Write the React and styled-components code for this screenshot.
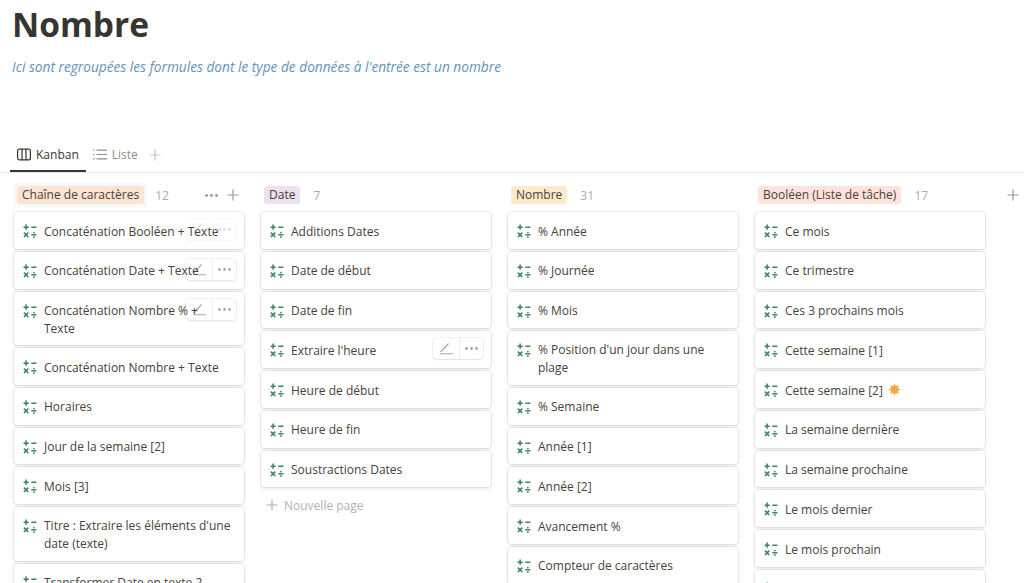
import React from "react";
import styled, { createGlobalStyle } from "styled-components";

const Global = createGlobalStyle`
  html, body { margin: 0; padding: 0; background: #fff; }
  body { font-family: "Open Sans", "Noto Sans", "Liberation Sans", sans-serif; color: #37352f; }
`;
const Page = styled.div`width: 1024px; height: 583px; overflow: hidden; background: #fff;`;
const Title = styled.h1`margin: 0; padding: 2px 0 0 12px; font-size: 33.5px; line-height: 45px; font-weight: 700; color: #37352f; font-family: "Open Sans", sans-serif;`;
const Subtitle = styled.p`margin: 0; padding: 10px 0 0 12px; font-size: 13.7px; line-height: 20px; font-style: italic; color: #5f93bd;`;
const Tabs = styled.div`margin-top: 65px; height: 30px; display: flex; align-items: flex-start; padding-left: 10px; border-bottom: 1px solid #e9e9e7; box-sizing: content-box;`;
const Tab = styled.div`
  height: 30px; box-sizing: border-box; display: flex; align-items: center; gap: 5px; padding: 0 7px 4px;
  font-size: 12px; font-weight: 500; color: ${p => (p.$active ? "#37352f" : "#8f8e8a")};
  border-bottom: 2px solid ${p => (p.$active ? "#37352f" : "transparent")};
`;
const TabPlus = styled.div`height: 26px; display: flex; align-items: center; margin-left: 4px; color: #c4c3c0;`;
const Board = styled.div`display: flex; padding: 10px 0 0 14px; gap: 17px; align-items: flex-start;`;
const Column = styled.div`width: 230px; flex: none; display: flex; flex-direction: column;`;
const Header = styled.div`height: 24px; margin-bottom: 5px; display: flex; align-items: center; position: relative;`;
const TagWrap = styled.div`height: 24px; display: flex; align-items: center; padding: 0 ${p => (p.$hover ? 3 : 5)}px 0 3px; border-radius: 3px; background: ${p => (p.$hover ? "#f7f7f5" : "transparent")};`;
const Tag = styled.span`height: 18px; line-height: 18px; padding: 0 5px; border-radius: 3px; font-size: 12px; font-weight: 500; color: #4a3f35; background: ${p => p.$bg}; white-space: nowrap;`;
const Count = styled.span`margin-left: 8px; font-size: 12px; color: #adaca8;`;
const HeadTools = styled.div`margin-left: auto; margin-right: 5px; display: flex; align-items: center; gap: 9px; color: #9b9a97;`;
const OuterPlus = styled.div`position: absolute; left: 252px; top: 6px; color: #9b9a97; display: flex;`;
const Cards = styled.div`display: flex; flex-direction: column; gap: 3px;`;
const Card = styled.div`
  position: relative; box-sizing: border-box; min-height: 36.75px; padding: 10px 13px 7.5px 9px;
  display: flex; gap: 7px; background: #fff; border-radius: 4px;
  box-shadow: 0 0 0 1px rgba(15,15,15,.07), 0 2px 4px rgba(15,15,15,.09);
`;
const IconBox = styled.span`flex: none; width: 14px; height: 18px; display: flex; align-items: center; color: #3f8560;`;
const CardText = styled.div`position: relative; z-index: 2; font-size: 12px; line-height: 18px; font-weight: 500; color: #45423c; flex: 1; display: flex; flex-wrap: wrap; align-items: center; column-gap: 5px;`;
const Actions = styled.div`
  position: absolute; z-index: ${p => (p.$solid ? 3 : 1)}; top: 7px; right: 8px; height: 21px; display: flex;
  background: #fff; border-radius: 4px; opacity: ${p => p.$opacity};
  box-shadow: 0 0 0 1px rgba(15,15,15,.06), 0 1px 2px rgba(15,15,15,.07);
`;
const ActionBtn = styled.div`width: ${p => p.$w}px; display: flex; align-items: center; justify-content: center; color: #a3a29e; & + & { border-left: 1px solid #efefed; }`;
const NewPage = styled.div`margin-top: 8px; padding-left: 5px; height: 20px; display: flex; align-items: center; gap: 6px; font-size: 12px; color: #b3b2ae;`;
const SunMark = styled.span`display: inline-flex; margin-top: -3px;`;

const Fn = () => (
  <svg width="14" height="14" viewBox="0 0 14 14" fill="none" stroke="currentColor" strokeWidth="1.6">
    <path d="M.5 3.2h5.2M3.1.6v5.2M8.3 3.2h5.2M.9 8.6l4.4 4.4M5.3 8.6l-4.4 4.4M8.3 10.8h5.2" />
    <circle cx="10.9" cy="8.6" r=".9" fill="currentColor" stroke="none" />
    <circle cx="10.9" cy="13" r=".9" fill="currentColor" stroke="none" />
  </svg>
);
const Plus = ({ s = 12 }) => (
  <svg width={s} height={s} viewBox="0 0 12 12" fill="none" stroke="currentColor" strokeWidth="1.2"><path d="M6 .5v11M.5 6h11" /></svg>
);
const Dots = () => (
  <svg width="13" height="3" viewBox="0 0 13 3" fill="currentColor"><circle cx="1.5" cy="1.5" r="1.4" /><circle cx="6.5" cy="1.5" r="1.4" /><circle cx="11.5" cy="1.5" r="1.4" /></svg>
);
const Pen = () => (
  <svg width="15" height="13" viewBox="0 0 15 13" fill="none" stroke="currentColor" strokeWidth="1.1"><path d="M1.5 10 9.5 1.5M1 11.8h13" /></svg>
);
const Sun = () => (
  <SunMark>
    <svg width="13" height="13" viewBox="0 0 13 13" fill="#f7a840">
      <circle cx="6.5" cy="6.5" r="3.9" />
      <path d="M6.5 0l1 3h-2zM6.5 13l1-3h-2zM0 6.5l3 1v-2zM13 6.5l-3 1v-2zM1.9 1.9l2.9 1.4-1.5 1.5zM11.1 1.9 8.2 3.3l1.5 1.5zM1.9 11.1l2.9-1.4-1.5-1.5zM11.1 11.1 8.2 9.7l1.5-1.5z" />
    </svg>
  </SunMark>
);
const Kanban = () => (
  <svg width="14" height="13" viewBox="0 0 14 13" fill="none" stroke="currentColor" strokeWidth="1.2"><rect x=".6" y="1.1" width="12.8" height="10.8" rx="2" /><path d="M5 1.1v10.8M9 1.1v10.8" /></svg>
);
const ListIcon = () => (
  <svg width="14" height="11" viewBox="0 0 14 11" fill="none" stroke="currentColor" strokeWidth="1.2"><path d="M3.5 1.2H14M3.5 5.5H14M3.5 9.8H14M0 1.2h1.5M0 5.5h1.5M0 9.8h1.5" /></svg>
);

const columns = [
  { tag: "Chaîne de caractères", bg: "#fbe4d3", count: 12, tools: true, hover: true, cards: [
    { t: "Concaténation Booléen + Texte", a: 0.35 },
    { t: "Concaténation Date + Texte", a: 0.9 },
    { t: "Concaténation Nombre % + Texte", a: 0.9 },
    { t: "Concaténation Nombre + Texte" }, { t: "Horaires" }, { t: "Jour de la semaine [2]" }, { t: "Mois [3]" },
    { t: "Titre : Extraire les éléments d'une date (texte)" }, { t: "Transformer Date en texte 2" },
  ] },
  { tag: "Date", bg: "#efe0ee", count: 7, isNew: true, cards: [
    { t: "Additions Dates" }, { t: "Date de début" }, { t: "Date de fin" }, { t: "Extraire l'heure", a: 1, solid: true },
    { t: "Heure de début" }, { t: "Heure de fin" }, { t: "Soustractions Dates" },
  ] },
  { tag: "Nombre", bg: "#fdeacb", count: 31, cards: [
    { t: "% Année" }, { t: "% Journée" }, { t: "% Mois" }, { t: "% Position d'un jour dans une plage" }, { t: "% Semaine" },
    { t: "Année [1]" }, { t: "Année [2]" }, { t: "Avancement %" }, { t: "Compteur de caractères" },
  ] },
  { tag: "Booléen (Liste de tâche)", bg: "#fde3dc", count: 17, outer: true, cards: [
    { t: "Ce mois" }, { t: "Ce trimestre" }, { t: "Ces 3 prochains mois" }, { t: "Cette semaine [1]" }, { t: "Cette semaine [2]", sun: true },
    { t: "La semaine dernière" }, { t: "La semaine prochaine" }, { t: "Le mois dernier" }, { t: "Le mois prochain" }, { t: "Le trimestre dernier" },
  ] },
];

export default function App() {
  return (
    <Page>
      <Global />
      <Title>Nombre</Title>
      <Subtitle>Ici sont regroupées les formules dont le type de données à l'entrée est un nombre</Subtitle>
      <Tabs>
        <Tab $active><Kanban />Kanban</Tab>
        <Tab><ListIcon />Liste</Tab>
        <TabPlus><Plus /></TabPlus>
      </Tabs>
      <Board>
        {columns.map(c => (
          <Column key={c.tag}>
            <Header>
              <TagWrap $hover={c.hover}><Tag $bg={c.bg}>{c.tag}</Tag></TagWrap>
              <Count>{c.count}</Count>
              {c.tools && <HeadTools><Dots /><Plus /></HeadTools>}
              {c.outer && <OuterPlus><Plus /></OuterPlus>}
            </Header>
            <Cards>
              {c.cards.map(k => (
                <Card key={k.t}>
                  <IconBox><Fn /></IconBox>
                  <CardText>{k.t}{k.sun && <Sun />}</CardText>
                  {k.a && (
                    <Actions $opacity={k.a} $solid={k.solid}>
                      <ActionBtn $w={26}><Pen /></ActionBtn>
                      <ActionBtn $w={23}><Dots /></ActionBtn>
                    </Actions>
                  )}
                </Card>
              ))}
            </Cards>
            {c.isNew && <NewPage><Plus />Nouvelle page</NewPage>}
          </Column>
        ))}
      </Board>
    </Page>
  );
}
